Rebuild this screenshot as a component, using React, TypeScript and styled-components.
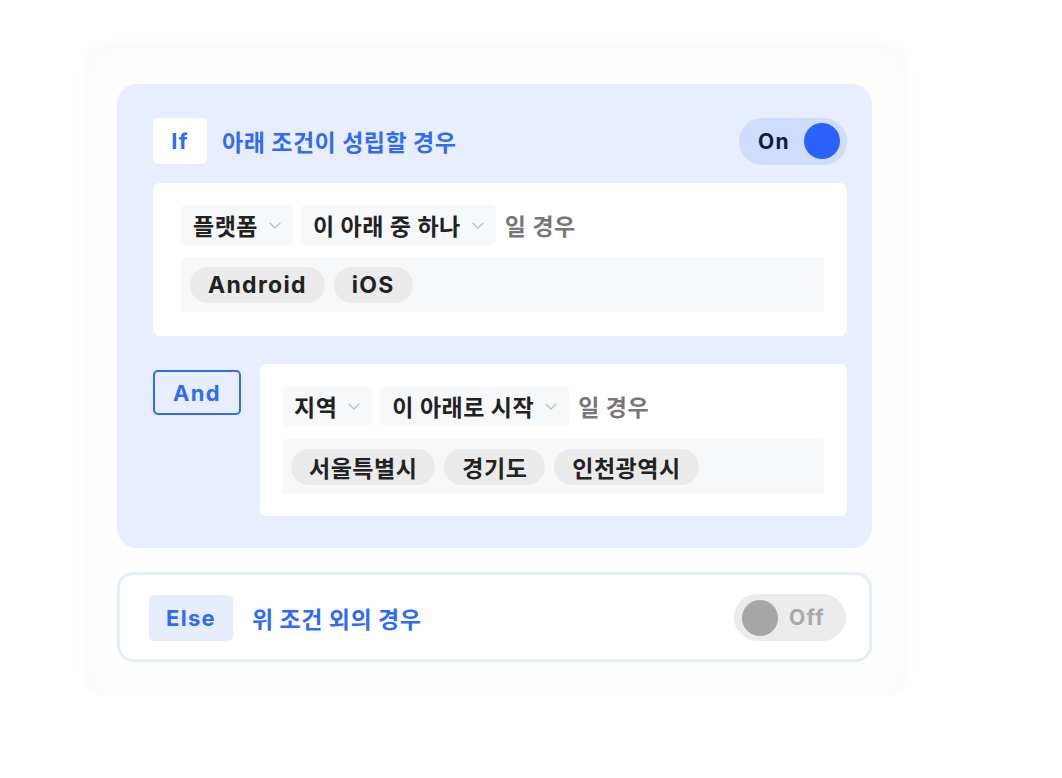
import React from "react";
import styled, { createGlobalStyle } from "styled-components";

const BLUE = "#2f6bf6";
const FONT = `Inter, "Noto Sans CJK KR", sans-serif`;

const GlobalStyle = createGlobalStyle`
  body {
    margin: 0;
    background: #ffffff;
    font-family: ${FONT};
    letter-spacing: 0.5px;
  }
`;

const Page = styled.div`
  padding: 48px 0 0 88px;
`;

const Card = styled.div`
  width: 816px;
  box-sizing: border-box;
  padding: 36px 32px 33px 29px;
  background: #fdfdfe;
  border-radius: 26px;
  box-shadow: 0 0 18px rgba(0, 0, 0, 0.045);
  display: flex;
  flex-direction: column;
  gap: 24px;
`;

const IfBlock = styled.div`
  background: #e8eefd;
  border-radius: 20px;
  padding: 34px 25px 32px 36px;
  display: flex;
  flex-direction: column;
`;

const HeaderRow = styled.div`
  display: flex;
  align-items: center;
  height: 46px;
`;

// latin words in the picture are set in a wide geometric face
const En = styled.span`
  letter-spacing: 1.3px;
`;

const Keyword = styled.div<{ $variant: "solid" | "outline" | "soft" }>`
  box-sizing: border-box;
  height: 46px;
  min-width: 54px;
  padding: 0 17px;
  display: flex;
  align-items: center;
  justify-content: center;
  border-radius: 5px;
  font-size: 22px;
  font-weight: 700;
  color: ${BLUE};
  background: ${(p) =>
    p.$variant === "solid" ? "#ffffff" : p.$variant === "soft" ? "#e6eefd" : "transparent"};
  border: ${(p) => (p.$variant === "outline" ? `2px solid ${BLUE}` : "none")};
`;

const Title = styled.div<{ $gap: number }>`
  margin-left: ${(p) => p.$gap}px;
  font-size: 23px;
  font-weight: 700;
  color: ${BLUE};
  flex: 1;
`;

const Toggle = styled.div<{ $on: boolean }>`
  box-sizing: border-box;
  height: 47px;
  width: ${(p) => (p.$on ? 108 : 112)}px;
  border-radius: 24px;
  padding: 0 7px 0 ${(p) => (p.$on ? 19 : 8)}px;
  display: flex;
  flex-direction: ${(p) => (p.$on ? "row" : "row-reverse")};
  justify-content: ${(p) => (p.$on ? "space-between" : "flex-end")};
  gap: 11px;
  align-items: center;
  background: ${(p) => (p.$on ? "#cfdcfd" : "#ececec")};
  font-size: 21px;
  font-weight: 700;
  color: ${(p) => (p.$on ? "#0e1a45" : "#a8a8a8")};
`;

const Knob = styled.div<{ $on: boolean }>`
  width: 36px;
  height: 36px;
  border-radius: 50%;
  background: ${(p) => (p.$on ? "#2b62fc" : "#a6a6a6")};
`;

const Condition = styled.div<{ $padLeft: number; $padBottom: number; $gap: number }>`
  background: #ffffff;
  border-radius: 7px;
  padding: 22px 23px ${(p) => p.$padBottom}px ${(p) => p.$padLeft}px;
  display: flex;
  flex-direction: column;
  gap: ${(p) => p.$gap}px;
  flex: 1;
`;

const SelectRow = styled.div`
  display: flex;
  align-items: center;
  gap: 8px;
`;

const Select = styled.div`
  height: 40px;
  box-sizing: border-box;
  padding: 0 12px;
  display: flex;
  align-items: center;
  gap: 11px;
  background: #f7f8fa;
  border-radius: 5px;
  font-size: 23px;
  font-weight: 700;
  color: #222;
`;

const Suffix = styled.span`
  margin-left: 1px;
  font-size: 23px;
  font-weight: 700;
  color: #777;
`;

const TagArea = styled.div`
  height: 55px;
  box-sizing: border-box;
  background: #f7f8fa;
  border-radius: 4px;
  padding: 0 9px;
  display: flex;
  align-items: center;
  gap: 9px;
`;

const Tag = styled.div`
  height: 36px;
  padding: 0 18px;
  display: flex;
  align-items: center;
  border-radius: 18px;
  background: #ebebeb;
  font-size: 23px;
  font-weight: 700;
  color: #222;
`;

const ConditionWrap = styled.div`
  margin-top: 19px;
  display: flex;
`;

const AndRow = styled.div`
  margin-top: 28px;
  display: flex;
  align-items: flex-start;
  gap: 19px;
`;

const AndKeyword = styled(Keyword)`
  margin-top: 6px;
  width: 88px;
  height: 45px;
`;

const ElseBlock = styled.div`
  border: 3px solid #e5edfd;
  border-radius: 16px;
  background: #ffffff;
  padding: 19px 23px 18px 29px;
  display: flex;
  align-items: center;
`;

const Chevron = () => (
  <svg width="12" height="7" viewBox="0 0 12 7" fill="none">
    <path d="M0.6 0.8L6 6L11.4 0.8" stroke="#c2c2c2" strokeWidth="1.3" />
  </svg>
);

const Dropdown = ({ label }: { label: string }) => (
  <Select>
    {label}
    <Chevron />
  </Select>
);

export default function App() {
  return (
    <Page>
      <GlobalStyle />
      <Card>
        <IfBlock>
          <HeaderRow>
            <Keyword $variant="solid">
              <En>If</En>
            </Keyword>
            <Title $gap={15}>아래 조건이 성립할 경우</Title>
            <Toggle $on>
              <En>On</En>
              <Knob $on />
            </Toggle>
          </HeaderRow>
          <ConditionWrap>
            <Condition $padLeft={28} $padBottom={24} $gap={12}>
              <SelectRow>
                <Dropdown label="플랫폼" />
                <Dropdown label="이 아래 중 하나" />
                <Suffix>일 경우</Suffix>
              </SelectRow>
              <TagArea>
                <Tag>
                  <En>Android</En>
                </Tag>
                <Tag>
                  <En>iOS</En>
                </Tag>
              </TagArea>
            </Condition>
          </ConditionWrap>
          <AndRow>
            <AndKeyword $variant="outline">
              <En>And</En>
            </AndKeyword>
            <Condition $padLeft={22} $padBottom={22} $gap={13}>
              <SelectRow>
                <Dropdown label="지역" />
                <Dropdown label="이 아래로 시작" />
                <Suffix>일 경우</Suffix>
              </SelectRow>
              <TagArea>
                <Tag>서울특별시</Tag>
                <Tag>경기도</Tag>
                <Tag>인천광역시</Tag>
              </TagArea>
            </Condition>
          </AndRow>
        </IfBlock>
        <ElseBlock>
          <Keyword $variant="soft">
            <En>Else</En>
          </Keyword>
          <Title $gap={19}>위 조건 외의 경우</Title>
          <Toggle $on={false}>
            <En>Off</En>
            <Knob $on={false} />
          </Toggle>
        </ElseBlock>
      </Card>
    </Page>
  );
}
